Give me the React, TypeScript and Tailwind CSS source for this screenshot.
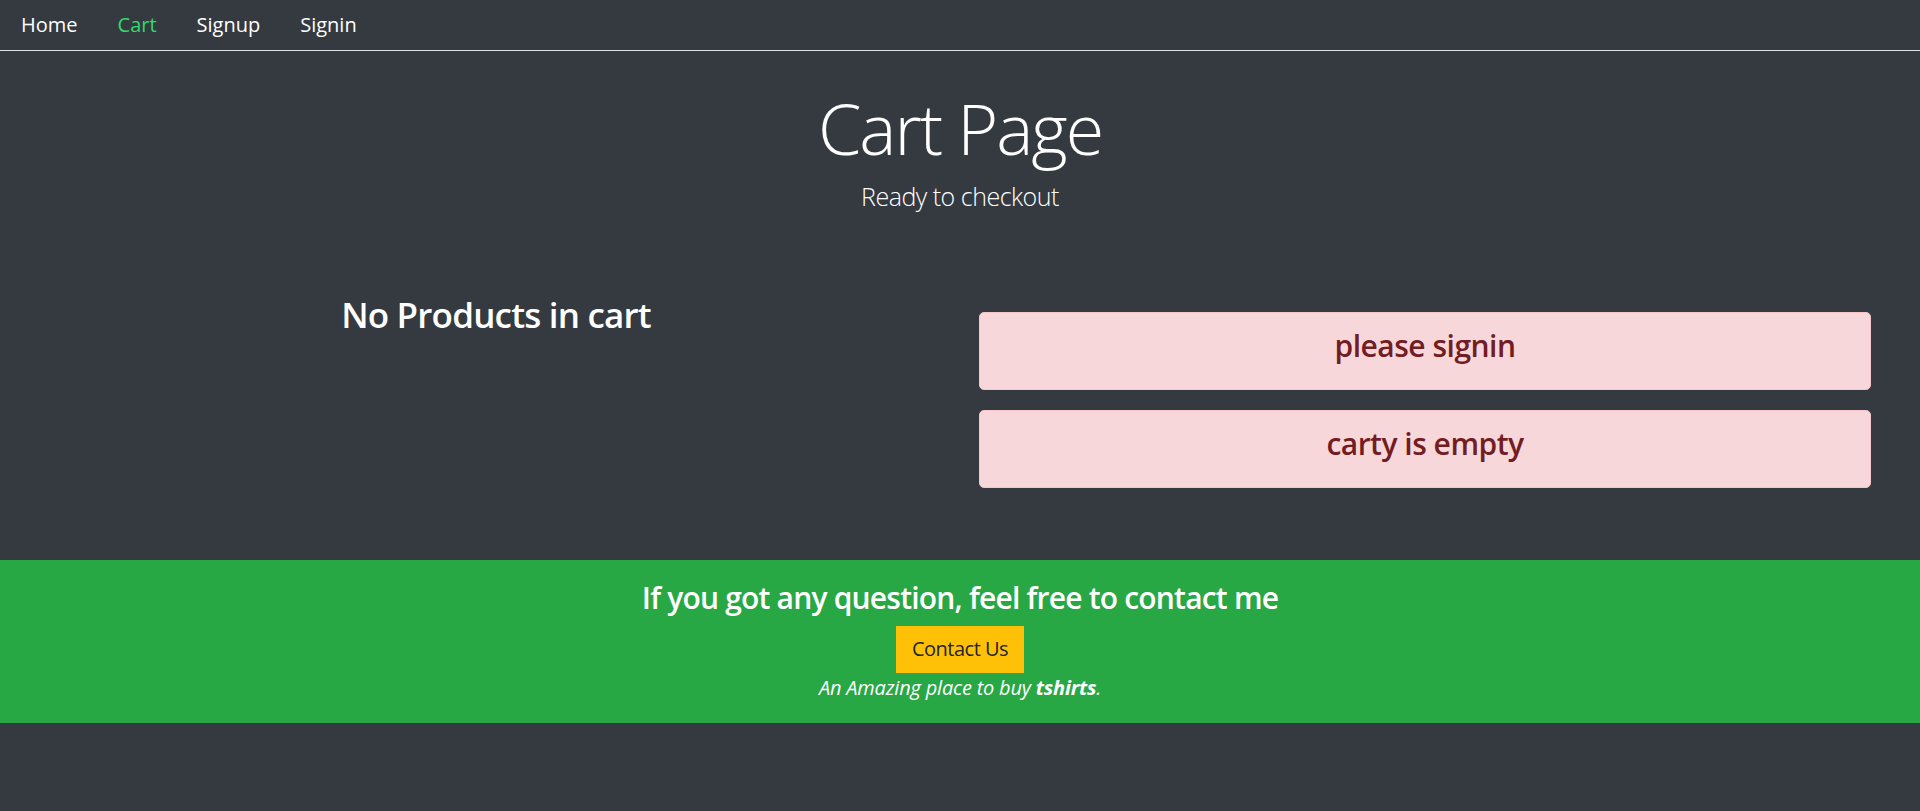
import React from "react";

export default function App() {
  const font = { fontFamily: '"Open Sans", "Noto Sans", "Liberation Sans", sans-serif' };
  return (
    <div className="min-h-[811px] bg-[#343a40] text-white" style={font}>
      {/* nav */}
      <nav className="flex h-[51px] border-b border-[#dee2e6] text-[20px] leading-[30px]">
        <a className="pl-[21px] pr-[20px] py-[10px] text-white">Home</a>
        <a className="px-[20px] py-[10px] text-[#2fdc6a]">Cart</a>
        <a className="px-[20px] py-[10px] text-white">Signup</a>
        <a className="px-[20px] py-[10px] text-white">Signin</a>
      </nav>

      {/* jumbotron */}
      <div className="pt-[35px] text-center">
        <h2 className="mb-[8px] text-[70px] font-light leading-[84px] tracking-[-2px]">Cart Page</h2>
        <p className="text-[25px] font-light leading-[37.5px] tracking-[-0.5px]">Ready to checkout</p>
      </div>

      {/* row */}
      <div className="mt-[78px] grid grid-cols-2">
        <div className="pl-[50px] pr-[18px] text-center">
          <h3 className="text-[35px] font-semibold leading-[42px] tracking-[-0.8px]">No Products in cart</h3>
        </div>
        <div className="pl-[19px] pr-[49px] pt-[18px]">
          <div className="mb-[20px] rounded-[5px] border border-[#f5c6cb] bg-[#f8d7da] px-[25px] py-[15px] text-center text-[#721c24]">
            <h4 className="mb-[10px] text-[30px] font-semibold leading-[36px] tracking-[-0.5px]">please signin</h4>
          </div>
          <div className="mb-[20px] rounded-[5px] border border-[#f5c6cb] bg-[#f8d7da] px-[25px] py-[15px] text-center text-[#721c24]">
            <h4 className="mb-[10px] text-[30px] font-semibold leading-[36px] tracking-[-0.5px]">carty is empty</h4>
          </div>
        </div>
      </div>

      {/* footer */}
      <footer className="mt-[52px] bg-[#28a745] py-[20px] text-center text-white">
        <h4 className="mb-[10px] text-[30px] font-semibold leading-[36px] tracking-[-0.8px]">
          If you got any question, feel free to contact me
        </h4>
        <button className="border border-[#ffc107] bg-[#ffc107] px-[15px] py-[7.5px] text-[20px] leading-[30px] tracking-[-0.5px] text-[#212529]">
          Contact Us
        </button>
        <p className="text-[20px] italic leading-[30px] tracking-[-0.2px]">
          An Amazing place to buy <b className="font-bold">tshirts</b>.
        </p>
      </footer>
    </div>
  );
}
